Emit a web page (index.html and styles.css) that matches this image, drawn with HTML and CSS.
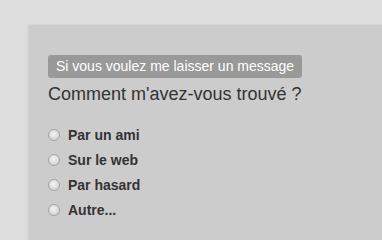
FILE: index.html
```html
<!DOCTYPE html>
<html lang="fr">
<head>
<meta charset="utf-8">
<title>Contact</title>
<link rel="stylesheet" href="styles.css">
</head>
<body>
<div class="panel">
  <div class="legend">Si vous voulez me laisser un message</div>
  <h2 class="question">Comment m'avez-vous trouvé ?</h2>
  <div class="options">
    <label class="option"><input type="radio" name="src" class="radio"><span>Par un ami</span></label>
    <label class="option"><input type="radio" name="src" class="radio"><span>Sur le web</span></label>
    <label class="option"><input type="radio" name="src" class="radio"><span>Par hasard</span></label>
    <label class="option"><input type="radio" name="src" class="radio"><span>Autre...</span></label>
  </div>
</div>
</body>
</html>
```
FILE: styles.css
```css
html, body {
  margin: 0;
  padding: 0;
  height: 100%;
}
body {
  background: #dddddd;
  font-family: "Liberation Sans", Arial, sans-serif;
  overflow: hidden;
  padding-top: 24px;
  box-sizing: border-box;
}
.panel {
  box-sizing: border-box;
  height: 100%;
  margin-left: 27px;
  background: #cccccc;
  border-top: 1px solid #d5d5d5;
  border-left: 2px solid #d5d5d5;
  padding: 30px 0 0 19px;
}
.legend {
  display: inline-block;
  background: #999999;
  color: #ffffff;
  font-size: 14px;
  line-height: 23px;
  height: 23px;
  padding: 0 8px 0 8px;
  border-radius: 3px;
}
.question {
  margin: 6px 0 0 0;
  font-size: 18px;
  line-height: 21px;
  font-weight: normal;
  color: #333333;
}
.options {
  display: flex;
  flex-direction: column;
  padding-top: 18px;
}
.option {
  display: flex;
  align-items: center;
  gap: 8px;
  height: 25px;
  font-size: 14px;
  font-weight: bold;
  color: #333333;
}
.option span {
  line-height: 25px;
}
.radio {
  appearance: none;
  -webkit-appearance: none;
  margin: 0;
  width: 12px;
  height: 12px;
  border-radius: 50%;
  border: 1px solid #a3a3a3;
  background: radial-gradient(circle at 45% 40%, #f4f4f4 0%, #e0e0e0 45%, #cacaca 100%);
  box-sizing: border-box;
  position: relative;
  top: -1px;
}
```
